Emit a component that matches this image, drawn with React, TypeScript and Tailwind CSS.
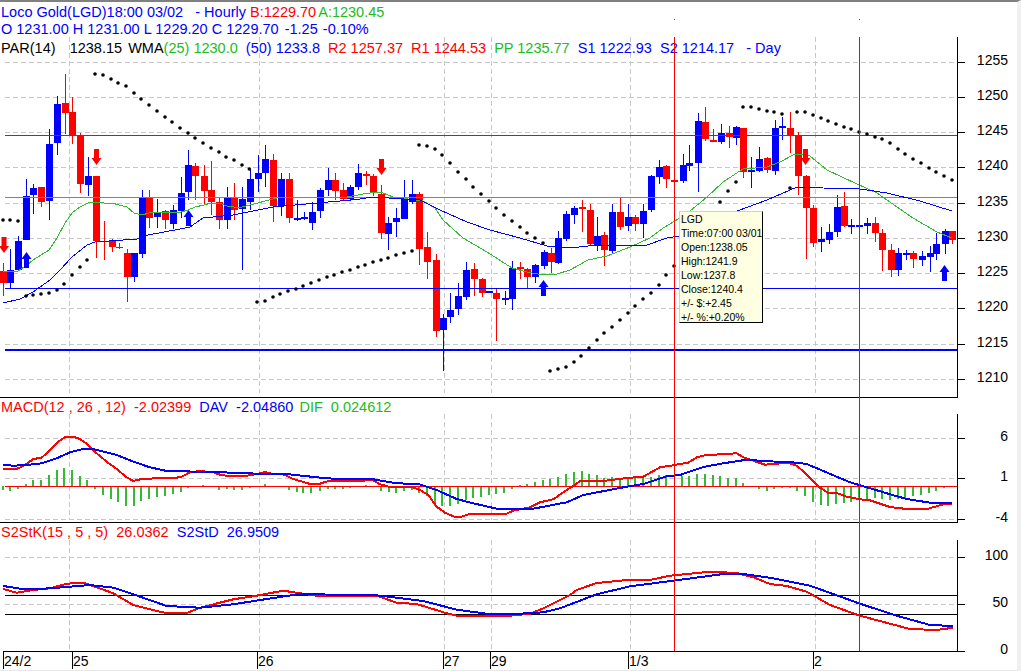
type Pt = [number, number];

// chart data was read off at 3x, so curves are kept as zoom coords + offset
const at = (ox: number, oy: number, list: Pt[]): Pt[] => list.map(([x, y]) => [ox + x / 3, oy + y / 3]);
const line = (list: Pt[]) => list.map(([x, y]) => `${x.toFixed(1)},${y.toFixed(1)}`).join(" ");

// x, high, low, body top, body bottom, colour
const CANDLES: [number, number, number, number, number, "r" | "b"][] = [
  [3, 263, 296, 271, 283, "r"], [10, 249, 288, 270, 283, "b"], [18, 236, 270, 241, 270, "b"], [26, 179, 240, 196, 240, "b"],
  [33, 184, 214, 188, 195, "b"], [41, 187, 207, 187, 202, "r"], [49, 129, 220, 144, 201, "b"], [57, 96, 155, 104, 143, "b"],
  [65, 74, 134, 103, 113, "r"], [72, 97, 144, 112, 135, "r"], [80, 133, 193, 135, 184, "r"], [88, 157, 196, 176, 185, "b"],
  [96, 176, 258, 176, 241, "r"], [104, 221, 260, 241, 242, "r"], [112, 239, 252, 241, 247, "r"], [119, 243, 249, 247, 248, "r"],
  [127, 249, 302, 253, 277, "r"], [134, 253, 282, 253, 277, "b"], [142, 190, 258, 198, 254, "b"], [149, 190, 228, 198, 218, "r"],
  [157, 199, 228, 212, 217, "b"], [165, 210, 229, 211, 220, "r"], [173, 205, 229, 210, 224, "b"], [181, 177, 218, 193, 211, "b"],
  [188, 150, 200, 165, 192, "b"], [195, 163, 200, 166, 176, "r"], [204, 165, 205, 176, 191, "r"], [211, 161, 215, 190, 202, "r"],
  [219, 197, 229, 202, 220, "r"], [227, 187, 229, 198, 220, "b"], [234, 183, 220, 198, 210, "r"], [242, 187, 270, 199, 209, "b"],
  [250, 170, 210, 179, 202, "b"], [258, 155, 192, 173, 179, "b"], [265, 145, 187, 159, 173, "b"], [273, 154, 222, 160, 206, "r"],
  [281, 173, 216, 179, 206, "b"], [289, 173, 223, 179, 218, "r"], [297, 200, 221, 218, 220, "b"], [304, 212, 220, 217, 219, "b"],
  [312, 202, 230, 212, 223, "b"], [320, 188, 218, 190, 211, "b"], [328, 168, 196, 180, 190, "b"], [335, 173, 200, 180, 191, "r"],
  [343, 183, 200, 190, 199, "r"], [350, 185, 201, 187, 199, "b"], [358, 164, 190, 173, 187, "b"], [366, 171, 185, 174, 176, "r"],
  [373, 174, 196, 176, 193, "r"], [381, 185, 239, 194, 233, "r"], [388, 217, 250, 223, 234, "b"], [396, 208, 237, 218, 222, "b"],
  [404, 180, 219, 197, 219, "b"], [412, 180, 204, 194, 202, "b"], [419, 192, 265, 194, 249, "r"], [427, 232, 279, 247, 262, "r"],
  [436, 254, 337, 260, 331, "r"], [443, 314, 371, 318, 330, "b"], [450, 293, 323, 310, 317, "b"], [458, 283, 315, 296, 309, "b"],
  [466, 262, 300, 270, 297, "b"], [474, 263, 296, 269, 279, "r"], [482, 278, 297, 279, 293, "r"], [489, 291, 293, 291, 293, "b"],
  [496, 289, 341, 293, 299, "r"], [505, 291, 305, 298, 300, "b"], [512, 261, 310, 268, 299, "b"], [520, 262, 279, 267, 269, "r"],
  [527, 268, 288, 269, 277, "r"], [535, 264, 283, 265, 277, "b"], [544, 250, 269, 252, 266, "b"], [551, 248, 273, 253, 262, "r"],
  [558, 231, 264, 238, 263, "b"], [566, 211, 241, 214, 239, "b"], [574, 206, 224, 208, 215, "b"], [582, 200, 232, 207, 209, "r"],
  [590, 204, 246, 210, 244, "r"], [597, 217, 251, 236, 245, "b"], [604, 232, 266, 235, 250, "r"], [612, 204, 253, 212, 251, "b"],
  [620, 197, 230, 212, 227, "r"], [628, 204, 231, 217, 226, "b"], [635, 215, 231, 217, 224, "r"], [643, 204, 238, 211, 224, "b"],
  [651, 175, 212, 176, 210, "b"], [659, 160, 184, 167, 177, "b"], [666, 165, 188, 166, 179, "r"], [674, 175, 188, 180, 182, "r"],
  [683, 154, 183, 165, 181, "b"], [689, 145, 171, 163, 166, "b"], [698, 113, 192, 121, 163, "b"], [705, 107, 141, 122, 139, "r"],
  [713, 129, 142, 140, 142, "r"], [721, 124, 144, 133, 142, "b"], [729, 126, 148, 133, 137, "r"], [736, 126, 145, 127, 138, "b"],
  [743, 128, 178, 128, 172, "r"], [751, 157, 188, 170, 172, "b"], [759, 147, 172, 159, 171, "b"], [767, 157, 173, 158, 170, "r"],
  [775, 120, 175, 128, 171, "b"], [782, 117, 140, 126, 128, "b"], [790, 112, 153, 128, 136, "r"], [798, 132, 195, 135, 176, "r"],
  [806, 175, 259, 176, 208, "r"], [813, 205, 247, 208, 243, "r"], [821, 227, 252, 239, 242, "b"], [829, 224, 244, 232, 240, "b"],
  [837, 195, 237, 207, 232, "b"], [844, 192, 227, 206, 226, "r"], [851, 219, 234, 225, 227, "b"], [859, 225, 227, 225, 227, "b"],
  [867, 218, 234, 223, 226, "b"], [875, 217, 242, 223, 233, "r"], [882, 229, 271, 233, 250, "r"], [891, 244, 277, 250, 270, "r"],
  [898, 248, 276, 253, 270, "b"], [906, 250, 260, 253, 255, "b"], [913, 251, 268, 253, 259, "r"], [922, 251, 266, 256, 260, "b"],
  [930, 246, 272, 253, 257, "b"], [936, 233, 260, 244, 254, "b"], [945, 229, 254, 231, 244, "b"], [952, 231, 244, 231, 240, "r"],
];

const PAR: Pt[] = [
  ...at(0, 200, [[9, 60], [30, 60], [54, 63], [78, 288], [99, 285], [123, 282], [147, 279], [171, 270], [192, 252], [216, 225], [240, 201], [261, 180]]),
  ...at(0, 0, [[285, 222], [309, 225], [333, 237], [354, 249], [378, 258], [402, 279], [423, 297], [447, 315], [471, 333], [495, 351], [516, 366], [540, 384], [564, 399], [585, 414], [609, 429], [633, 444], [657, 456], [678, 471], [702, 480], [726, 495], [748, 507]]),
  ...at(0, 200, [[771, 306], [795, 303], [819, 291], [840, 282], [864, 273], [888, 267], [909, 258], [933, 249], [957, 240], [981, 231], [1002, 225]]),
  ...at(340, 200, [[6, 216], [30, 210], [54, 201], [75, 195], [99, 186], [123, 180], [144, 174], [168, 165], [192, 159], [216, 153]]),
  ...at(340, 0, [[237, 435], [261, 438], [285, 447], [306, 465], [330, 489], [354, 516], [378, 537], [399, 561], [423, 582]]),
  ...at(340, 200, [[447, 3], [468, 24], [492, 45], [516, 63], [540, 81], [561, 99], [585, 114], [609, 129], [630, 513], [654, 507], [678, 501], [702, 486], [723, 468], [747, 444], [771, 420], [792, 399], [816, 381], [840, 360], [864, 339], [885, 318], [909, 297], [933, 279], [957, 255], [978, 225], [1002, 198]]),
  ...at(680, 0, [[120, 606], [144, 573], [168, 546], [330, 564], [189, 321], [213, 321], [237, 327], [261, 333], [282, 336], [306, 342], [351, 336], [375, 336], [399, 345], [423, 354], [444, 363], [468, 372], [492, 381], [513, 387], [537, 396], [561, 402], [585, 411], [606, 417], [630, 429], [654, 447], [675, 462], [699, 477], [723, 489], [747, 504], [768, 516], [792, 528], [816, 540]]),
];

const WMA25: Pt[] = [[3, 272], [18, 271], [27, 265], [33, 260], [41, 255], [49, 250], [57, 238], [65, 223], [72, 213], [80, 207], [88, 203], [96, 202], [104, 203], [112, 203], [119, 205], [127, 207], [134, 213], [142, 215], [149, 213], [157, 212], [181, 212], [188, 210], [195, 207], [204, 205], [211, 203], [219, 203], [227, 206], [234, 207], [242, 207], [250, 205], [258, 203], [265, 201], [273, 199], [281, 197], [333, 197], [347, 197], [363, 194], [377, 192], [383, 193], [393, 197], [423, 201], [435, 208], [443, 220], [463, 238], [487, 252], [512, 268], [527, 272], [543, 275], [557, 274], [570, 270], [588, 260], [607, 256], [630, 247], [650, 238], [663, 228], [680, 218], [690, 211], [707, 197], [723, 182], [743, 169], [767, 167], [780, 162], [795, 154], [810, 156], [827, 170], [857, 184], [877, 193], [887, 200], [913, 218], [937, 232], [952, 238]];
const WMA50: Pt[] = [[3, 303], [20, 299], [33, 292], [50, 280], [60, 270], [72, 257], [87, 245], [95, 242], [137, 239], [148, 235], [180, 229], [190, 227], [203, 218], [233, 215], [273, 207], [317, 203], [340, 201], [360, 199], [373, 197], [420, 200], [440, 210], [467, 222], [490, 230], [520, 238], [547, 246], [570, 248], [597, 245], [647, 245], [667, 238], [680, 236], [737, 211], [767, 200], [797, 187], [823, 188], [860, 189], [887, 193], [920, 201], [952, 211]];

const HIST: Pt[] = [
  ...at(0, 395, [[8, 285], [30, 288], [54, 282], [77, 267], [99, 255], [123, 255], [147, 240], [171, 225], [192, 219], [216, 225], [240, 243], [262, 255], [286, 282], [310, 300], [332, 312], [355, 321], [379, 333], [402, 333], [424, 318], [447, 312], [470, 306], [494, 303], [518, 297], [542, 291], [565, 279], [586, 276], [610, 270], [658, 285], [680, 282], [703, 285], [727, 285], [750, 279], [796, 267], [866, 285], [890, 291], [910, 294], [934, 294], [959, 288], [983, 282], [1005, 282]]),
  ...at(340, 395, [[8, 282], [31, 279], [77, 270], [124, 288], [146, 291], [168, 294], [192, 288], [217, 285], [238, 294], [262, 303], [286, 333], [307, 333], [331, 333], [355, 327], [379, 315], [400, 309], [424, 306], [448, 300], [469, 297], [493, 294], [517, 282], [541, 270], [562, 267], [586, 261], [610, 255], [631, 252], [655, 246], [679, 237], [703, 231], [725, 228], [748, 237], [772, 240], [793, 249], [817, 246], [841, 249], [865, 249], [886, 249], [910, 249], [934, 246], [958, 240], [979, 240]]),
  ...at(680, 395, [[5, 243], [27, 243], [51, 237], [75, 237], [99, 240], [120, 243], [144, 249], [168, 249], [190, 264], [238, 282], [262, 288], [283, 282], [307, 279], [331, 279], [352, 288], [376, 303], [400, 321], [424, 330], [445, 333], [469, 327], [493, 324], [514, 321], [538, 312], [562, 312], [586, 309], [607, 312], [631, 315], [655, 312], [676, 309], [700, 303], [724, 300], [748, 294], [769, 288], [793, 279]]),
];

const MACD_RED: Pt[] = [
  ...at(0, 395, [[10, 222], [50, 222], [75, 210], [100, 192], [125, 188], [150, 165], [175, 140], [195, 126], [220, 125], [240, 132], [265, 150], [290, 175], [320, 200], [350, 222], [380, 247], [400, 258], [425, 252], [470, 250], [520, 250], [545, 245], [570, 232], [600, 228], [640, 232], [655, 238], [690, 244], [730, 244], [770, 237], [795, 231], [820, 237], [850, 238], [880, 252], [930, 267], [960, 266], [985, 258], [1020, 257]]),
  ...at(340, 395, [[50, 257], [100, 256], [120, 268], [150, 276], [215, 276], [240, 285], [265, 300], [290, 335], [315, 353], [345, 366], [365, 365], [385, 358], [495, 358], [520, 347], [570, 337], [600, 322], [640, 313], [680, 285], [700, 273], [720, 258], [790, 258], [830, 253], [870, 248], [910, 245], [960, 217], [1000, 211], [1020, 207]]),
  ...at(680, 395, [[25, 203], [50, 187], [75, 181], [120, 178], [170, 175], [190, 187], [225, 199], [255, 209], [325, 203], [350, 212], [380, 238], [420, 278], [445, 294], [470, 294], [500, 305], [540, 313], [570, 316], [630, 336], [680, 342], [745, 341], [790, 328], [817, 327]]),
];
const MACD_BLUE: Pt[] = [
  ...at(0, 395, [[10, 210], [40, 212], [80, 210], [125, 205], [170, 190], [210, 172], [250, 162], [280, 162], [350, 180], [400, 200], [450, 217], [500, 228], [640, 231], [800, 237], [860, 237], [950, 247], [1020, 253]]),
  ...at(340, 395, [[100, 253], [170, 265], [235, 267], [290, 285], [350, 312], [400, 325], [470, 341], [580, 341], [680, 322], [730, 300], [860, 275], [910, 267], [980, 244], [1020, 240]]),
  ...at(680, 395, [[70, 216], [130, 205], [200, 194], [260, 199], [330, 201], [380, 207], [430, 228], [510, 262], [560, 277], [630, 298], [680, 312], [750, 323], [817, 323]]),
];

const STOCH_RED: Pt[] = [
  ...at(0, 525, [[10, 192], [50, 203], [100, 195], [150, 190], [200, 176], [250, 173], [285, 185], [340, 205], [400, 240], [470, 258], [500, 264], [560, 264], [600, 248], [700, 223], [760, 214], [850, 197], [900, 205], [950, 212], [1000, 213], [1130, 212], [1190, 233], [1250, 237], [1340, 265], [1370, 272], [1530, 272]]),
  ...at(510, 525, [[60, 266], [100, 250], [180, 210], [200, 195], [260, 174], [350, 165], [420, 165], [480, 152], [600, 140], [680, 144], [730, 157], [780, 177], [830, 183], [890, 200], [960, 240], [1050, 272], [1200, 312], [1280, 315], [1330, 308]]),
];
const STOCH_BLUE: Pt[] = [
  ...at(0, 525, [[10, 183], [60, 191], [130, 191], [200, 186], [270, 180], [340, 188], [400, 208], [500, 243], [600, 248], [700, 238], [800, 222], [900, 207], [1050, 210], [1130, 211], [1270, 228], [1370, 254], [1460, 266], [1530, 268]]),
  ...at(510, 525, [[100, 262], [150, 250], [260, 208], [360, 184], [490, 167], [640, 147], [700, 147], [790, 160], [900, 182], [1050, 236], [1160, 272], [1260, 300], [1330, 303]]),
];

const GRID_X = [69, 259, 444, 491, 630, 815];
const PRICE_TICKS: [string, number][] = [["1255", 62], ["1250", 97], ["1245", 132], ["1240", 167], ["1235", 203], ["1230", 238], ["1225", 273], ["1220", 308], ["1215", 344], ["1210", 379]];
const DATES: [string, number][] = [["24/2", 3], ["25", 72], ["26", 257], ["27", 443], ["29", 490], ["1/3", 628], ["2", 813]];

function Grid({ from, to, ys }: { from: number; to: number; ys: number[] }) {
  return (
    <g stroke="#c8c8c8" strokeDasharray="5 3" shapeRendering="crispEdges">
      {GRID_X.map((x) => <line key={x} x1={x + 0.5} x2={x + 0.5} y1={from} y2={to} />)}
      {ys.map((y) => <line key={y} x1={5} x2={957} y1={y + 0.5} y2={y + 0.5} />)}
    </g>
  );
}

function Axis({ from, to, ticks, labelX }: { from: number; to: number; ticks: [string, number][]; labelX: number }) {
  return (
    <g>
      <g stroke="#000" shapeRendering="crispEdges">
        <line x1={957.5} x2={957.5} y1={from} y2={to} />
        {ticks.map(([t, y]) => <line key={t} x1={957} x2={965} y1={y + 0.5} y2={y + 0.5} />)}
      </g>
      {ticks.map(([t, y]) => (
        <text key={t} x={labelX} y={y + 3} textAnchor="end" fontSize="14" fill="#000">{t}</text>
      ))}
    </g>
  );
}

function Arrow({ x, y, dir }: { x: number; y: number; dir: "up" | "down" }) {
  // y is the tip of the arrow
  const s = dir === "down" ? -1 : 1;
  const pts: Pt[] = [[x, y], [x + 5, y + s * 7], [x + 2.5, y + s * 7], [x + 2.5, y + s * 16], [x - 2.5, y + s * 16], [x - 2.5, y + s * 7], [x - 5, y + s * 7]];
  return <polygon points={line(pts)} fill={dir === "down" ? "#ff0000" : "#0000ff"} />;
}

function PriceChart() {
  return (
    <svg className="block overflow-visible" width={1017} height={361} viewBox="0 37 1017 361">
      <Grid from={37} to={393} ys={PRICE_TICKS.map((t) => t[1])} />
      <g shapeRendering="crispEdges">
        {CANDLES.map(([x, hi, lo, top, bot, c]) => (
          <g key={x} fill={c === "r" ? "#ff0000" : "#0000ff"}>
            <rect x={x} y={hi} width={1} height={lo - hi} />
            <rect x={x - 3} y={top} width={7} height={bot - top} />
          </g>
        ))}
        <line x1={5} x2={957} y1={135.5} y2={135.5} stroke="#ff0000" />
        <line x1={5} x2={957} y1={197.5} y2={197.5} stroke="#33bb33" />
        <line x1={5} x2={957} y1={288.5} y2={288.5} stroke="#0000ff" />
        <line x1={5} x2={957} y1={350} y2={350} stroke="#0000ff" strokeWidth={2} />
        <polyline points={line(WMA25)} fill="none" stroke="#33bb33" />
        <polyline points={line(WMA50)} fill="none" stroke="#0000ff" />
      </g>
      {PAR.map(([x, y], i) => <circle key={i} cx={x} cy={y} r={1.8} fill="#000" />)}
      <Arrow x={96.5} y={165} dir="down" />
      <Arrow x={4} y={253} dir="down" />
      <Arrow x={381.5} y={175} dir="down" />
      <Arrow x={805.5} y={165} dir="down" />
      <Arrow x={26.5} y={252} dir="up" />
      <Arrow x={188.5} y={210} dir="up" />
      <Arrow x={543.5} y={280} dir="up" />
      <Arrow x={944.5} y={265} dir="up" />
      <Axis from={37} to={397} ticks={PRICE_TICKS} labelX={1008} />
      <line x1={0} x2={958} y1={397.5} y2={397.5} stroke="#000" shapeRendering="crispEdges" />
    </svg>
  );
}

function MacdChart() {
  return (
    <svg className="block overflow-visible" width={1017} height={109} viewBox="0 414 1017 109">
      <Grid from={414} to={520} ys={[438, 478, 519]} />
      <g shapeRendering="crispEdges">
        {HIST.map(([x, y]) => (
          <rect key={x} x={Math.round(x) - 1} y={Math.min(y, 486)} width={2} height={Math.abs(y - 486)} fill="#33bb33" />
        ))}
        <line x1={5} x2={957} y1={486.5} y2={486.5} stroke="#ff0000" />
        <polyline points={line(MACD_RED)} fill="none" stroke="#ff0000" strokeWidth={2} />
        <polyline points={line(MACD_BLUE)} fill="none" stroke="#0000ff" strokeWidth={2} />
      </g>
      <Axis from={414} to={522} ticks={[["6", 438], ["1", 478], ["-4", 519]]} labelX={1008} />
      <line x1={0} x2={958} y1={522.5} y2={522.5} stroke="#000" shapeRendering="crispEdges" />
    </svg>
  );
}

function StochChart() {
  return (
    <svg className="block overflow-visible" width={1017} height={130} viewBox="0 540 1017 130">
      <Grid from={540} to={651} ys={[557, 604]} />
      <g shapeRendering="crispEdges">
        <line x1={5} x2={957} y1={595.5} y2={595.5} stroke="#000" />
        <line x1={5} x2={957} y1={614.5} y2={614.5} stroke="#000" />
        <polyline points={line(STOCH_RED)} fill="none" stroke="#ff0000" strokeWidth={2} />
        <polyline points={line(STOCH_BLUE)} fill="none" stroke="#0000ff" strokeWidth={2} />
      </g>
      <Axis from={540} to={651} ticks={[["100", 557], ["50", 604], ["0", 651]]} labelX={1008} />
      <g stroke="#000" shapeRendering="crispEdges">
        <line x1={3} x2={958} y1={651.5} y2={651.5} />
        {DATES.map(([d, x]) => <line key={d} x1={x + 0.5} x2={x + 0.5} y1={651} y2={669} />)}
      </g>
      {DATES.map(([d, x]) => (
        <text key={d} x={x + 1} y={666} fontSize="14" fill="#000">{d}</text>
      ))}
    </svg>
  );
}

const TIP = ["LGD", "Time:07:00 03/01", "Open:1238.05", "High:1241.9", "Low:1237.8", "Close:1240.4", "+/- $:+2.45", "+/- %:+0.20%"];

export default function App() {
  return (
    <div className="relative w-[1021px] h-[671px] overflow-hidden bg-white border-t-2 border-r-4 border-b border-t-[#808080] border-r-[#f0f0f0] border-b-[#e8e8e8] font-['Liberation_Sans',sans-serif] text-[14.5px]">
      <div className="h-[35px] pt-[2px] pl-px leading-[17px] whitespace-pre">
        <div className="text-[#0000ff]">
          Loco Gold(LGD)18:00 03/02{"   "}- Hourly <span className="text-[#ff0000]">B:1229.70</span> <span className="-ml-[2px] text-[#22bb22]">A:1230.45</span>
        </div>
        <div className="text-[#0000ff]">O 1231.00 H 1231.00 L 1229.20 C 1229.70{"  "}<span className="-ml-[2px]">-1.25</span>{"  "}<span className="-ml-[3px]">-0.10%</span></div>
        <div className="mt-[2px]">
          <span className="text-black">PAR(14){"    "}<span className="-ml-[2px]">1238.15</span>{"  "}<span className="-ml-[2px]">WMA</span></span>
          <span className="text-[#22bb22]">(25) 1230.0</span>
          <span className="text-[#0000ff]">{"  "}(50) 1233.8</span>
          <span className="text-[#ff0000]">{"  "}R2 1257.37{"  "}R1 1244.53</span>
          <span className="text-[#22bb22]">{"  "}PP 1235.77</span>
          <span className="text-[#0000ff]">{"  "}S1 1222.93{"  "}S2 1214.17{"   "}- Day</span>
        </div>
      </div>

      <PriceChart />

      <div className="h-[16px] pl-px leading-[18px] whitespace-pre">
        <span className="text-[#ff0000]">MACD(12 , 26 , 12){"  "}-2.02399</span>
        <span className="text-[#0000ff]">{"  "}DAV{"  "}-2.04860</span>
        <span className="-ml-[2px] text-[#22bb22]">{"  "}DIF{"  "}0.024612</span>
      </div>

      <MacdChart />

      <div className="h-[17px] pl-px leading-[18px] whitespace-pre">
        <span className="text-[#ff0000]">S2StK(15 , 5 , 5){"  "}26.0362</span>
        <span className="text-[#0000ff]">{"  "}S2StD{"  "}26.9509</span>
      </div>

      <StochChart />

      {/* crosshair lines run through every panel */}
      <div className="absolute left-[674px] top-[35px] h-[614px] w-px bg-[#ff0000]" />
      <div className="absolute left-[859px] top-[35px] h-[614px] w-px bg-[#ff0000]" />
      <div className="absolute left-[674px] top-[17px] h-px w-px bg-[#ff0000]" />
      <div className="absolute left-[859px] top-[17px] h-px w-px bg-[#ff0000]" />

      <div className="absolute left-[679px] top-[209px] h-[112px] w-[84px] border border-t-[#d0d0d0] border-l-[#d0d0d0] border-r-black border-b-black bg-[#ffffe1] text-[10.5px] leading-[14px] text-black">
        {TIP.map((t) => <div key={t} className="whitespace-pre pl-px">{t}</div>)}
      </div>
    </div>
  );
}
